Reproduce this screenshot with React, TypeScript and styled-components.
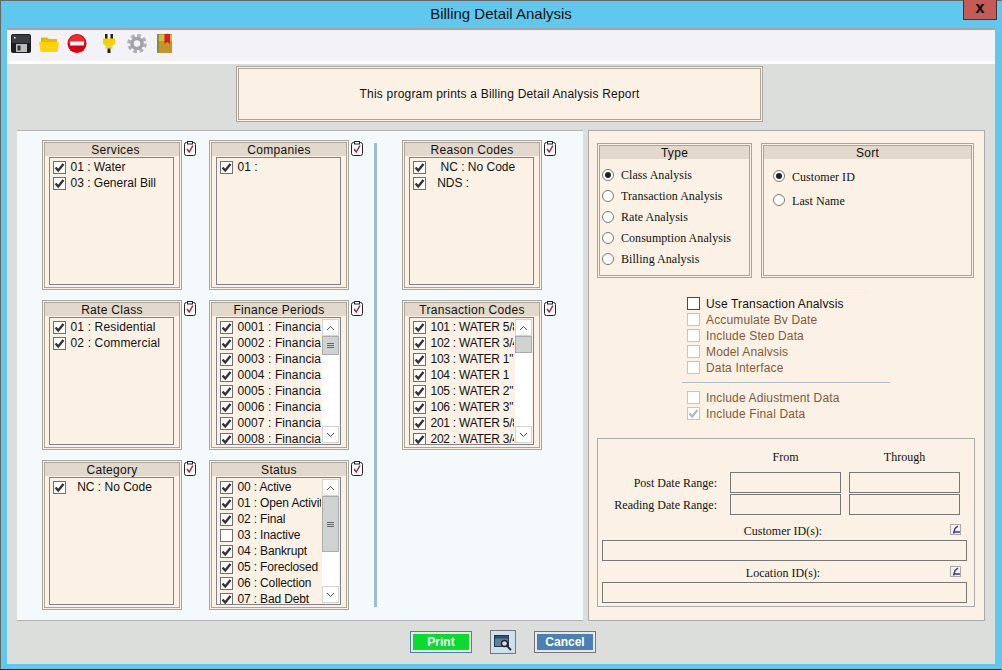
import React from 'react';
import styled, { createGlobalStyle } from 'styled-components';

const GlobalStyle = createGlobalStyle`
  html, body {
    margin: 0;
    padding: 0;
    height: 670px;
    overflow: hidden;
    font-family: 'Liberation Sans', Arial, sans-serif;
  }
  * { box-sizing: border-box; }
`;

const Window = styled.div`
  width: 1002px;
  height: 670px;
  background: #5fc8ec;
  border-top: 1px solid #666;
  border-left: 1px solid #666;
  border-right: 1px solid #5fc8ec;
  border-bottom: 1px solid #222;
  padding: 0 6px 5px;
  display: flex;
  flex-direction: column;
`;

const TitleBar = styled.div`
  height: 27px;
  flex: none;
  position: relative;
  display: flex;
  align-items: center;
  justify-content: center;
  padding-bottom: 2px;
  font-size: 15px;
  color: #111;
`;

const CloseButton = styled.div`
  position: absolute;
  top: -1px;
  right: -2px;
  width: 34px;
  height: 20px;
  background: #c45b55;
  border: 1px solid #4f3030;
  border-top: none;
  display: flex;
  align-items: center;
  justify-content: center;
  padding-bottom: 3px;
  font-size: 16px;
  font-weight: 700;
  line-height: 1;
  color: #000;
`;

const Toolbar = styled.div`
  height: 36px;
  flex: none;
  background: #f3f2f6;
  border-top: 2px solid #a3a3a8;
  border-bottom: 3px solid #fff;
  display: flex;
  align-items: center;
  padding: 0 0 4px 4px;
`;

const ToolIcon = styled.span<{ $gap?: number }>`
  display: flex;
  width: 20px;
  height: 20px;
  margin-right: ${p => p.$gap ?? 8}px;
`;

const Body = styled.div`
  flex: 1;
  background: #dcdedb;
  padding: 2px 10px 0;
  display: flex;
  flex-direction: column;
`;

const Description = styled.div`
  width: 527px;
  height: 56px;
  margin-left: 219px;
  background: #fbf2e5;
  border: 3px double #a9a59a;
  display: flex;
  align-items: center;
  justify-content: center;
  font-size: 12px;
  letter-spacing: 0.2px;
  color: #111;
`;

const Panels = styled.div`
  display: flex;
  gap: 5px;
  margin-top: 8px;
  height: 491px;
`;

const LeftPanel = styled.div`
  width: 566px;
  background: #f4f9fc;
  border-top: 1px solid #b4b4b4;
  border-bottom: 1px solid #b4b4b4;
  padding: 9px 0 0 25px;
  display: flex;
`;

const CardColumn = styled.div<{ $width: number }>`
  width: ${p => p.$width}px;
  display: flex;
  flex-direction: column;
  gap: 10px;
`;

const Divider = styled.div`
  width: 3px;
  height: 464px;
  margin: 3px 25px 0 0;
  background: #9cbccf;
`;

const CardSlot = styled.div`
  display: flex;
  align-items: flex-start;
  gap: 2px;
`;

const Card = styled.div`
  width: 140px;
  height: 150px;
  background: #fbf2e5;
  border: 3px double #a9a59a;
  display: flex;
  flex-direction: column;
`;

const GroupHeader = styled.div<{ $shift?: number }>`
  height: 13px;
  flex: none;
  background: #e2d9cc;
  padding-left: ${p => p.$shift ?? 0}px;
  font-size: 12px;
  line-height: 15px;
  letter-spacing: 0.3px;
  text-align: center;
  color: #111;
`;

const ListBox = styled.div`
  flex: 1;
  min-height: 0;
  margin: 1px 5px 2px 4px;
  border: 1px solid #80808f;
  display: flex;
  overflow: hidden;
`;

const ListRows = styled.div<{ $tracking?: number }>`
  flex: 1;
  min-width: 0;
  padding: 1px 0 0 3px;
  overflow: hidden;
  letter-spacing: ${p => p.$tracking ?? 0}px;
`;

const ListRow = styled.div`
  height: 16px;
  display: flex;
  align-items: center;
  gap: 4.5px;
  font-size: 12px;
  color: #111;
  white-space: pre;
`;

const CheckBox = styled.span<{ $tone?: 'normal' | 'strong' | 'muted' }>`
  width: 13px;
  height: 13px;
  flex: none;
  display: flex;
  align-items: center;
  justify-content: center;
  background: #fff;
  border: 1px solid ${p => (p.$tone === 'muted' ? '#c4c4c4' : p.$tone === 'strong' ? '#4a4a4a' : '#707070')};
`;

const ScrollBar = styled.div`
  width: 17px;
  flex: none;
  margin: 1px;
  background: #fff;
  display: flex;
  flex-direction: column;
`;

const ScrollButton = styled.div`
  height: 17px;
  flex: none;
  background: #fff;
  border: 1px solid #d4d4d4;
  display: flex;
  align-items: center;
  justify-content: center;
`;

const ScrollTrack = styled.div`
  flex: 1;
  min-height: 0;
`;

const ScrollThumb = styled.div<{ $height: number }>`
  height: ${p => p.$height}px;
  background: #cfd3d2;
  border: 1px solid #ababab;
  display: flex;
  flex-direction: column;
  align-items: center;
  justify-content: center;
  gap: 1px;
`;

const GripLine = styled.span`
  width: 7px;
  height: 1px;
  background: #666;
`;

const RightPanel = styled.div`
  width: 397px;
  background: #fbf2e5;
  border: 1px solid #aaa;
  padding: 12px 0 0 8px;
  display: flex;
  flex-direction: column;
`;

const OptionRow = styled.div`
  display: flex;
  gap: 9px;
  height: 135px;
  flex: none;
`;

const OptionBox = styled.div<{ $width: number; $rowHeight: number; $inset: number }>`
  width: ${p => p.$width}px;
  background: #fbf2e5;
  border: 3px double #a9a59a;
  --row-height: ${p => p.$rowHeight}px;
  --row-inset: ${p => p.$inset}px;
`;

const RadioList = styled.div`
  padding: 5px 0 0 var(--row-inset);
`;

const RadioRow = styled.div`
  height: var(--row-height);
  display: flex;
  align-items: center;
  gap: 7px;
  padding-top: 2px;
  font-family: 'Liberation Serif', 'Times New Roman', serif;
  font-size: 12px;
  letter-spacing: 0.05px;
  color: #111;
`;

const RadioDot = styled.span<{ $on?: boolean }>`
  width: 12px;
  height: 12px;
  flex: none;
  margin-top: -2px;
  border-radius: 50%;
  background: #fff;
  border: 1px solid #777;
  display: flex;
  align-items: center;
  justify-content: center;
  &::after {
    content: '';
    display: ${p => (p.$on ? 'block' : 'none')};
    width: 6px;
    height: 6px;
    border-radius: 50%;
    background: #222;
  }
`;

const FlagGroup = styled.div`
  margin: 14px 0 0 90px;
  display: flex;
  flex-direction: column;
`;

const FaintRule = styled.div`
  width: 126px;
  height: 1px;
  margin: 0 0 2px 55px;
  background: #fbeae2;
`;

const FlagRow = styled.div`
  height: 16px;
  display: flex;
  align-items: center;
  gap: 6px;
`;

const FlagLabel = styled.span<{ $disabled?: boolean }>`
  display: block;
  height: 11px;
  margin-bottom: 1px;
  line-height: 14px;
  overflow: hidden;
  font-size: 12px;
  letter-spacing: 0.15px;
  white-space: nowrap;
  color: ${p => (p.$disabled ? '#85583a' : '#111')};
`;

const FlagRule = styled.div`
  width: 208px;
  height: 1px;
  margin: 7px 0 6px -5px;
  background: #a9bccb;
`;

const RangeBox = styled.div`
  width: 378px;
  height: 169px;
  margin-top: 17px;
  border: 1px solid #aaa;
  padding: 11px 0 0 4px;
  font-family: 'Liberation Serif', 'Times New Roman', serif;
  font-size: 12px;
  color: #111;
`;

const RangeGrid = styled.div`
  display: grid;
  grid-template-columns: 120px 111px 111px;
  column-gap: 8px;
  row-gap: 1px;
  align-items: center;
`;

const RangeHeading = styled.div`
  height: 21px;
  padding-bottom: 7px;
  text-align: center;
`;

const RangeLabel = styled.div`
  padding: 2px 5px 0 0;
  text-align: right;
`;

const TextField = styled.div`
  height: 21px;
  background: #fbf2e5;
  border: 1px solid #777;
`;

const IdSection = styled.div<{ $top: number }>`
  width: 365px;
  margin-top: ${p => p.$top}px;
`;

const IdHeading = styled.div`
  height: 16px;
  display: flex;
  align-items: flex-start;
  padding-right: 6px;
`;

const IdLabel = styled.div`
  flex: 1;
  padding-left: 14px;
  text-align: center;
  line-height: 14px;
`;

const LookupIcon = styled.span`
  display: flex;
  width: 11px;
  height: 11px;
`;

const Footer = styled.div`
  display: flex;
  justify-content: center;
  align-items: center;
  gap: 18px;
  padding: 9px 0 0 4px;
`;

const ActionButton = styled.div<{ $fill: string; $edge: string }>`
  width: 62px;
  height: 22px;
  padding: 2px;
  background: #e8e8e4;
  border: 1px solid ${p => p.$edge};
  font-size: 12px;
  font-weight: 700;
  color: #fff;
  & > span {
    height: 100%;
    display: flex;
    align-items: center;
    justify-content: center;
    background: ${p => p.$fill};
  }
`;

const PreviewButton = styled.div`
  width: 26px;
  height: 24px;
  background: #cfe0ee;
  border: 1px solid #777;
  display: flex;
  align-items: center;
  justify-content: center;
`;

const Tick = ({ color = '#333' }: { color?: string }) => (
  <svg width="11" height="11" viewBox="0 0 11 11">
    <path d="M1.5 5.5 L4.2 8.5 L9.5 2" fill="none" stroke={color} strokeWidth="2.4" />
  </svg>
);

const ClipboardIcon = () => (
  <svg width="13" height="15" viewBox="0 0 13 15" style={{ flex: 'none', marginTop: 1 }}>
    <rect x="0.5" y="1.5" width="11" height="13" rx="2" fill="#fff" stroke="#222" />
    <rect x="3.5" y="0.5" width="5" height="2.5" fill="#fff" stroke="#222" />
    <path d="M3 8 L5.2 11 L9 4.5" fill="none" stroke="#a51c2c" strokeWidth="1.4" />
  </svg>
);

const Chevron = ({ up }: { up?: boolean }) => (
  <svg width="9" height="6" viewBox="0 0 9 6">
    <path d={up ? 'M1 5 L4.5 1.5 L8 5' : 'M1 1 L4.5 4.5 L8 1'} fill="none" stroke="#555" />
  </svg>
);

const FloppyIcon = () => (
  <svg width="20" height="20" viewBox="0 0 20 20">
    <rect x="0" y="0" width="20" height="19" rx="2" fill="#1d1d20" />
    <rect x="1" y="1" width="18" height="8" fill="#3c3d42" />
    <rect x="5" y="10" width="11" height="8" fill="#bcbcbc" />
    <rect x="6.5" y="11.5" width="3" height="5" fill="#333" />
    <rect x="3" y="3" width="1.5" height="1.5" fill="#eee" />
  </svg>
);

const FolderIcon = () => (
  <svg width="20" height="20" viewBox="0 0 20 20">
    <path d="M2 3.5 L8 3.5 L10 5 L18 5 L18 8 L2 8 Z" fill="#e8b500" />
    <path d="M0 8 L20 8 L18.5 18 L1.5 18 Z" fill="#ffd30a" />
  </svg>
);

const StopIcon = () => (
  <svg width="20" height="20" viewBox="0 0 20 20">
    <circle cx="10" cy="9.5" r="9.5" fill="#d8000f" />
    <path d="M1.5 9.5 A8.5 8.5 0 0 1 18.5 9.5 Z" fill="#ef2a30" />
    <rect x="3" y="7.5" width="14" height="4" fill="#f2f2f2" />
  </svg>
);

const PlugIcon = () => (
  <svg width="20" height="20" viewBox="0 0 20 20">
    <rect x="6" y="0" width="2.5" height="5" fill="#222" />
    <rect x="11.5" y="0" width="2.5" height="5" fill="#222" />
    <path d="M4 4.5 H16 V10 L12 12.5 H8 L4 10 Z" fill="#f7d000" />
    <rect x="6.5" y="12.5" width="7" height="2" fill="#f7d000" />
    <rect x="8.5" y="14.5" width="3" height="4.5" fill="#222" />
  </svg>
);

const GearIcon = () => (
  <svg width="20" height="20" viewBox="0 0 20 20">
    <circle cx="10" cy="9.5" r="8" fill="none" stroke="#b0b0b6" strokeWidth="3.6" strokeDasharray="3.6 2.68" />
    <circle cx="10" cy="9.5" r="5" fill="none" stroke="#a2a2a8" strokeWidth="3.6" />
    <circle cx="10" cy="9.5" r="2.8" fill="#f3f2f6" />
  </svg>
);

const BookIcon = () => (
  <svg width="15" height="20" viewBox="0 0 15 20">
    <rect x="0" y="0" width="15" height="19" fill="#c4962a" />
    <rect x="0" y="0" width="2" height="19" fill="#8a8a50" />
    <rect x="2" y="1" width="13" height="6" fill="#c8c43a" />
    <path d="M7.5 0 H13 V10 L10.2 8 L7.5 10 Z" fill="#e0182a" />
  </svg>
);

const Lookup = () => (
  <LookupIcon>
    <svg width="11" height="11" viewBox="0 0 11 11">
      <rect x="0.5" y="0.5" width="10" height="10" fill="#f4f4f4" stroke="#a8a8a8" />
      <path d="M8 2 L5 4.5 L3.5 9.5 M3.5 8 H10" fill="none" stroke="#3c35a0" strokeWidth="1.4" />
    </svg>
  </LookupIcon>
);

const PreviewIcon = () => (
  <svg width="18" height="17" viewBox="0 0 18 17">
    <rect x="0.5" y="1.5" width="14" height="11" fill="#5e7f9e" stroke="#25384c" />
    <rect x="1" y="2" width="13" height="2.5" fill="#2f4f6f" />
    <circle cx="10.5" cy="9.5" r="3" fill="#cfe0ee" stroke="#222" strokeWidth="1.3" />
    <path d="M12.8 11.8 L17 16" stroke="#222" strokeWidth="1.8" />
  </svg>
);

interface Item {
  label: string;
  off?: boolean;
}

const items = (...labels: string[]): Item[] => labels.map(label => ({ label }));

interface GroupData {
  title: string;
  rows: Item[];
  thumb?: number;
  grip?: boolean;
  tracking?: number;
  shift?: number;
}

const services: GroupData = { title: 'Services', shift: 7, rows: items('01 : Water', '03 : General Bill') };
const rateClass: GroupData = { title: 'Rate Class', rows: items('01 : Residential', '02 : Commercial'), tracking: 0.15 };
const category: GroupData = { title: 'Category', rows: items('\u00a0\u00a0NC : No Code') };
const companies: GroupData = { title: 'Companies', rows: items('01 :') };
const financePeriods: GroupData = {
  title: 'Finance Periods',
  thumb: 19,
  grip: true,
  tracking: 0.1,
  rows: items(
    '0001 : Financial', '0002 : Financial', '0003 : Financial', '0004 : Financial',
    '0005 : Financial', '0006 : Financial', '0007 : Financial', '0008 : Financial',
  ),
};
const status: GroupData = {
  title: 'Status',
  thumb: 56,
  grip: true,
  tracking: -0.15,
  rows: [
    { label: '00 : Active' },
    { label: '01 : Open Activity' },
    { label: '02 : Final' },
    { label: '03 : Inactive', off: true },
    { label: '04 : Bankrupt' },
    { label: '05 : Foreclosed' },
    { label: '06 : Collection' },
    { label: '07 : Bad Debt' },
  ],
};
const reasonCodes: GroupData = { title: 'Reason Codes', rows: items('\u00a0\u00a0\u00a0NC : No Code', '\u00a0\u00a0NDS :') };
const transactionCodes: GroupData = {
  title: 'Transaction Codes',
  thumb: 17,
  tracking: -0.25,
  rows: items(
    '101 : WATER 5/8"', '102 : WATER 3/4"', '103 : WATER 1"', '104 : WATER 1',
    '105 : WATER 2"', '106 : WATER 3"', '201 : WATER 5/8"', '202 : WATER 3/4"',
  ),
};

function Group({ title, rows, thumb, grip, tracking, shift }: GroupData) {
  return (
    <CardSlot>
      <Card>
        <GroupHeader $shift={shift}>{title}</GroupHeader>
        <ListBox>
          <ListRows $tracking={tracking}>
            {rows.map(row => (
              <ListRow key={row.label}>
                <CheckBox>{!row.off && <Tick />}</CheckBox>
                {row.label}
              </ListRow>
            ))}
          </ListRows>
          {thumb && (
            <ScrollBar>
              <ScrollButton><Chevron up /></ScrollButton>
              <ScrollTrack>
                <ScrollThumb $height={thumb}>
                  {grip && <><GripLine /><GripLine /><GripLine /></>}
                </ScrollThumb>
              </ScrollTrack>
              <ScrollButton><Chevron /></ScrollButton>
            </ScrollBar>
          )}
        </ListBox>
      </Card>
      <ClipboardIcon />
    </CardSlot>
  );
}

function Flag({ label, disabled, checked, strong }: { label: string; disabled?: boolean; checked?: boolean; strong?: boolean }) {
  return (
    <FlagRow>
      <CheckBox $tone={strong ? 'strong' : 'muted'}>{checked && <Tick color="#b8b8b8" />}</CheckBox>
      <FlagLabel $disabled={disabled}>{label}</FlagLabel>
    </FlagRow>
  );
}

export default function App() {
  return (
    <>
      <GlobalStyle />
      <Window>
        <TitleBar>
          Billing Detail Analysis
          <CloseButton>x</CloseButton>
        </TitleBar>
        <Toolbar>
          <ToolIcon><FloppyIcon /></ToolIcon>
          <ToolIcon><FolderIcon /></ToolIcon>
          <ToolIcon $gap={12}><StopIcon /></ToolIcon>
          <ToolIcon $gap={8}><PlugIcon /></ToolIcon>
          <ToolIcon $gap={10}><GearIcon /></ToolIcon>
          <ToolIcon><BookIcon /></ToolIcon>
        </Toolbar>
        <Body>
          <Description>This program prints a Billing Detail Analysis Report</Description>
          <Panels>
            <LeftPanel>
              <CardColumn $width={167}>
                <Group {...services} />
                <Group {...rateClass} />
                <Group {...category} />
              </CardColumn>
              <CardColumn $width={165}>
                <Group {...companies} />
                <Group {...financePeriods} />
                <Group {...status} />
              </CardColumn>
              <Divider />
              <CardColumn $width={167}>
                <Group {...reasonCodes} />
                <Group {...transactionCodes} />
              </CardColumn>
            </LeftPanel>
            <RightPanel>
              <OptionRow>
                <OptionBox $width={155} $rowHeight={21} $inset={2}>
                  <GroupHeader>Type</GroupHeader>
                  <RadioList>
                    <RadioRow><RadioDot $on />Class Analysis</RadioRow>
                    <RadioRow><RadioDot />Transaction Analysis</RadioRow>
                    <RadioRow><RadioDot />Rate Analysis</RadioRow>
                    <RadioRow><RadioDot />Consumption Analysis</RadioRow>
                    <RadioRow><RadioDot />Billing Analysis</RadioRow>
                  </RadioList>
                </OptionBox>
                <OptionBox $width={213} $rowHeight={24} $inset={9}>
                  <GroupHeader>Sort</GroupHeader>
                  <RadioList>
                    <RadioRow><RadioDot $on />Customer ID</RadioRow>
                    <RadioRow><RadioDot />Last Name</RadioRow>
                  </RadioList>
                </OptionBox>
              </OptionRow>
              <FlagGroup>
                <FaintRule />
                <Flag label="Use Transaction Analysis" strong />
                <Flag label="Accumulate By Date" disabled />
                <Flag label="Include Step Data" disabled />
                <Flag label="Model Analysis" disabled />
                <Flag label="Data Interface" disabled />
                <FlagRule />
                <Flag label="Include Adjustment Data" disabled />
                <Flag label="Include Final Data" disabled checked />
              </FlagGroup>
              <RangeBox>
                <RangeGrid>
                  <span />
                  <RangeHeading>From</RangeHeading>
                  <RangeHeading>Through</RangeHeading>
                  <RangeLabel>Post Date Range:</RangeLabel>
                  <TextField />
                  <TextField />
                  <RangeLabel>Reading Date Range:</RangeLabel>
                  <TextField />
                  <TextField />
                </RangeGrid>
                <IdSection $top={9}>
                  <IdHeading>
                    <IdLabel>Customer ID(s):</IdLabel>
                    <Lookup />
                  </IdHeading>
                  <TextField />
                </IdSection>
                <IdSection $top={5}>
                  <IdHeading>
                    <IdLabel>Location ID(s):</IdLabel>
                    <Lookup />
                  </IdHeading>
                  <TextField />
                </IdSection>
              </RangeBox>
            </RightPanel>
          </Panels>
          <Footer>
            <ActionButton $fill="#0adb2f" $edge="#4a7fb0"><span>Print</span></ActionButton>
            <PreviewButton><PreviewIcon /></PreviewButton>
            <ActionButton $fill="#4a80b3" $edge="#777"><span>Cancel</span></ActionButton>
          </Footer>
        </Body>
      </Window>
    </>
  );
}
